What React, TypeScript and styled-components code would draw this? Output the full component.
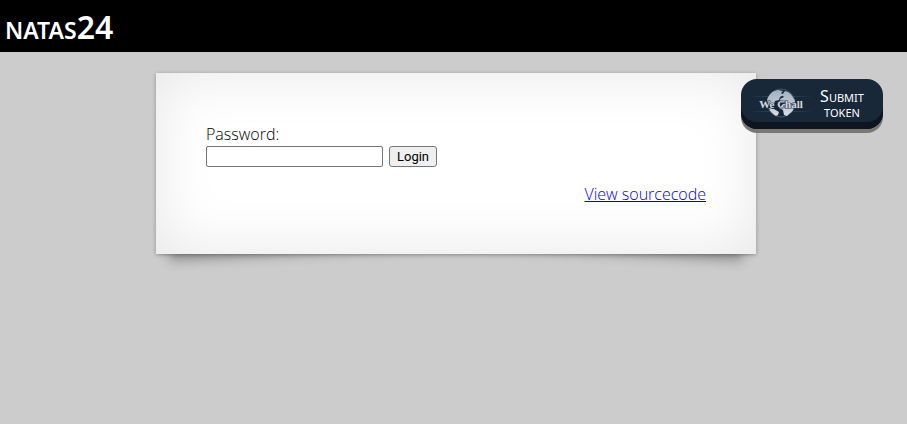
import React from "react";
import styled, { createGlobalStyle, css } from "styled-components";

const GlobalStyle = createGlobalStyle`
  body {
    margin: 0;
    background: #cccccc;
    color: #000;
    font-family: "Open Sans", "Noto Sans", sans-serif;
    font-size: 16px;
    font-weight: 350;
    line-height: 22px;
  }
`;

const Page = styled.div`
  position: relative;
`;

const Header = styled.header`
  background: #000;
  padding: 5px 5px 3px;
`;

const Title = styled.h1`
  margin: 0;
  color: #fff;
  font-family: "Noto Sans", sans-serif;
  font-size: 32px;
  font-weight: 600;
  line-height: 44px;
`;

const SmallCapitals = styled.span`
  font-size: 23px;
  line-height: 1;
  text-transform: uppercase;
`;

const Main = styled.main`
  isolation: isolate;
  padding: 21px 0 40px 5px;
`;

const liftedCorner = css`
  content: "";
  position: absolute;
  z-index: -1;
  bottom: 16px;
  width: 50%;
  height: 20%;
  max-width: 300px;
  box-shadow: 0 15px 12px rgba(0, 0, 0, 0.3);
`;

const Lift = styled.div`
  position: relative;
  max-width: 600px;
  margin: 0 auto;

  &::before {
    ${liftedCorner}
    left: 12px;
    transform: rotate(-3deg);
  }

  &::after {
    ${liftedCorner}
    right: 12px;
    transform: rotate(3deg);
  }
`;

const Card = styled.section`
  padding: 50px;
  background: #fff;
  box-shadow:
    0 1px 4px rgba(0, 0, 0, 0.3),
    inset 0 0 60px rgba(0, 0, 0, 0.1);
`;

const PasswordLabel = styled.label`
  display: block;
`;

const FieldRow = styled.div`
  display: flex;
  gap: 6px;
  padding-top: 1px;
`;

const PasswordInput = styled.input`
  box-sizing: border-box;
  width: 177px;
  height: 21px;
  padding: 1px 2px;
  border: 1px solid #767676;
  border-radius: 2px;
  background: #fff;
  font: 13px "Noto Sans", sans-serif;
`;

const LoginButton = styled.button`
  box-sizing: border-box;
  width: 48px;
  height: 21px;
  padding: 0;
  border: 1px solid #767676;
  border-radius: 3px;
  background: #efefef;
  color: #000;
  font: 13px/18px Roboto, sans-serif;
`;

const SourceRow = styled.div`
  padding-top: 18px;
  line-height: 19px;
  text-align: right;
`;

const SourceLink = styled.a`
  color: #0000ee;
`;

const TokenButton = styled.button`
  position: absolute;
  top: 79px;
  right: 24px;
  display: flex;
  align-items: center;
  width: 142px;
  height: 50px;
  padding: 0 12px 0 8px;
  border: 0;
  border-radius: 16px;
  background: #182838;
  box-shadow:
    inset 0 -7px 0 #0d1520,
    0 4px 0 #7b7777;
  color: #fff;
`;

const Logo = styled.svg`
  flex: none;
  width: 64px;
  height: 40px;
`;

const TokenText = styled.span`
  display: block;
  flex: 1;
  padding: 0 4px;
  font: 11px/15px "Noto Sans", sans-serif;
  text-align: center;
  text-transform: uppercase;

  &::first-letter {
    font-size: 16px;
  }
`;

function WeChallLogo() {
  return (
    <Logo viewBox="0 0 64 40" role="img" aria-label="We Chall">
      <defs>
        <linearGradient id="streak">
          <stop offset="0" stopColor="#34516e" stopOpacity="0" />
          <stop offset=".5" stopColor="#34516e" />
          <stop offset="1" stopColor="#34516e" stopOpacity="0" />
        </linearGradient>
        <linearGradient id="land" x2="0" y2="1">
          <stop offset="0" stopColor="#a3b0bd" />
          <stop offset="1" stopColor="#d5dce4" />
        </linearGradient>
      </defs>
      <path d="M0 12h64v1H0zM0 27h64v1H0z" fill="url(#streak)" />
      <circle cx="32" cy="19" r="14" fill="#14263b" stroke="#53677c" strokeWidth=".7" />
      <path
        d="M18 17c1-6 5-10 11-11l5 1-2 2 3 2-4 2-1 3-4 1-1 3-4 1-1-1zM36 7c5 1 8 5 10 10l-1 5-3-3-3 2-3-3-4 1-1-4 4-2-2-2zM20 24l5 1 5 3-1 3-2 1c-3-2-6-4-7-8zM34 20l6-1 5 3c0 4-2 6-5 8l-2 2-3-1-1-5-4-2z"
        fill="url(#land)"
      />
      <text
        x="32"
        y="24"
        textAnchor="middle"
        fontFamily="Liberation Serif, serif"
        fontSize="11"
        fontWeight="700"
        fill="#d2d8df"
        stroke="#26364a"
        strokeWidth="1"
        paintOrder="stroke"
      >
        We Chall
      </text>
    </Logo>
  );
}

export default function App() {
  return (
    <>
      <GlobalStyle />
      <Page>
        <Header>
          <Title>
            <SmallCapitals>natas</SmallCapitals>24
          </Title>
        </Header>
        <Main>
          <Lift>
            <Card>
              <form onSubmit={(event) => event.preventDefault()}>
                <PasswordLabel htmlFor="password">Password:</PasswordLabel>
                <FieldRow>
                  <PasswordInput id="password" name="passwd" type="text" />
                  <LoginButton type="submit">Login</LoginButton>
                </FieldRow>
              </form>
              <SourceRow>
                <SourceLink href="#source">View sourcecode</SourceLink>
              </SourceRow>
            </Card>
          </Lift>
        </Main>
        <TokenButton type="button">
          <WeChallLogo />
          <TokenText>Submit token</TokenText>
        </TokenButton>
      </Page>
    </>
  );
}
